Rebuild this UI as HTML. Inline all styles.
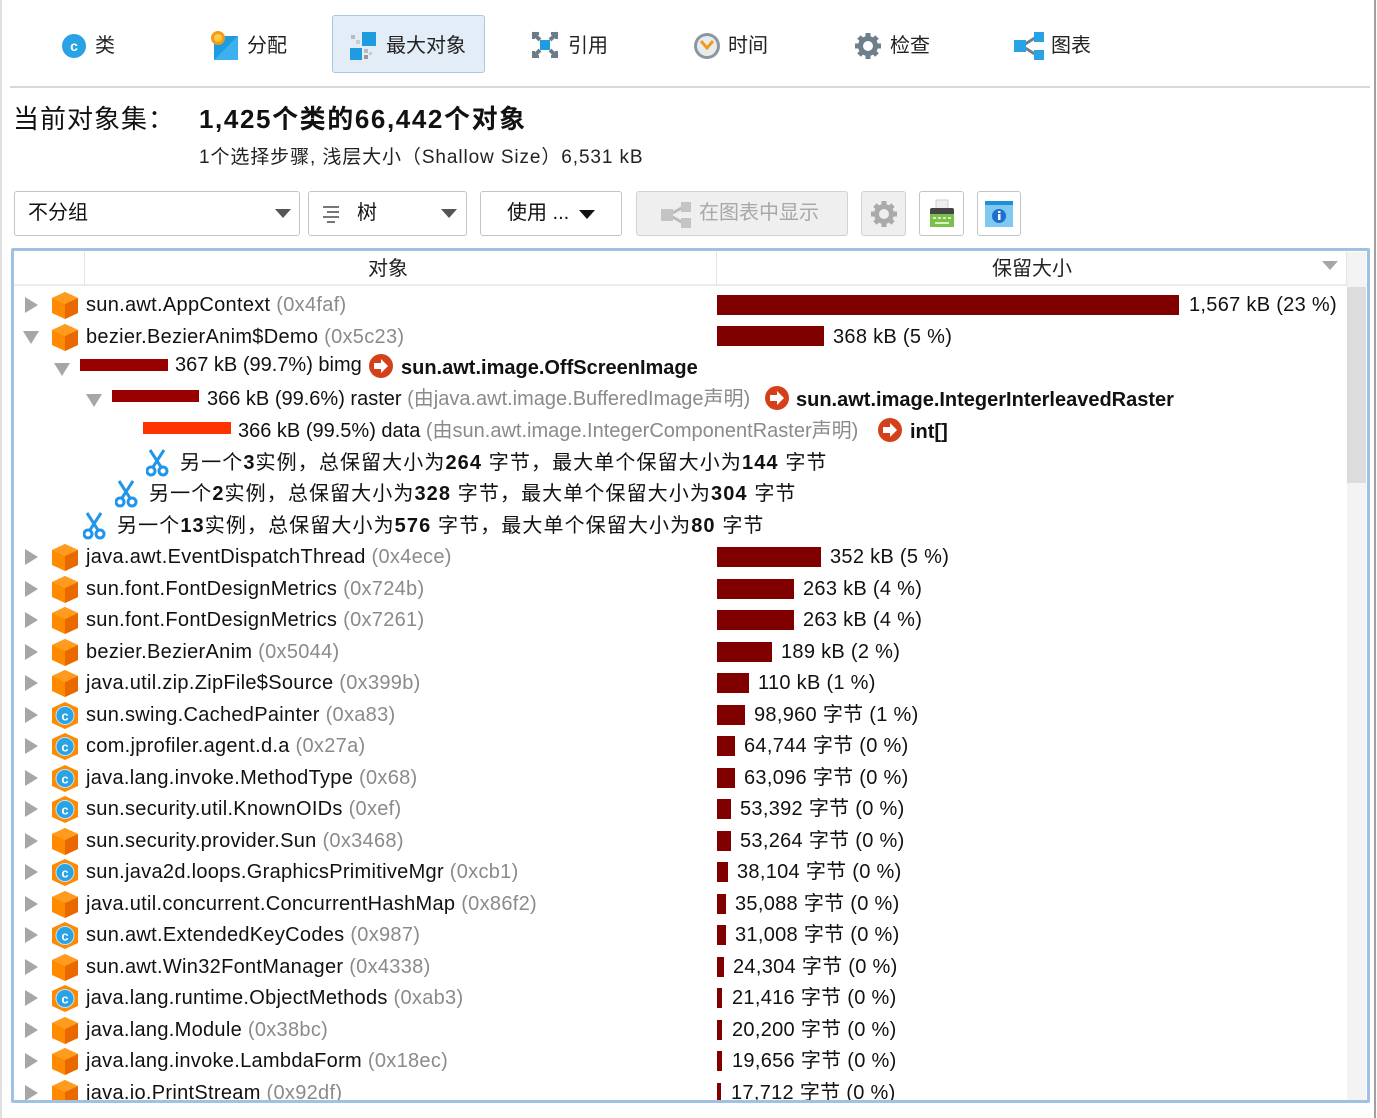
<!DOCTYPE html>
<html><head><meta charset="utf-8">
<style>
*{margin:0;padding:0;box-sizing:border-box}
body{width:1377px;height:1118px;background:#fff;position:relative;overflow:hidden;font-family:"Liberation Sans","Noto Sans CJK SC",sans-serif;color:#111}
.a{position:absolute;white-space:nowrap}
.tab{position:absolute;top:17px;height:58px;font-size:20px;line-height:58px;color:#222}
.btn{position:absolute;top:191px;height:45px;border:1px solid #c4c4c4;border-radius:3px;background:#fff;font-size:20px;line-height:43px}
.row{position:absolute;height:31px;line-height:31px;font-size:20px;white-space:nowrap;letter-spacing:0.3px}
.row.s{letter-spacing:1.1px}
.row.z{letter-spacing:0}
.g{color:#8a8a8a}
.tri{position:absolute;width:0;height:0}
.tr{border-left:13px solid #a6a6a6;border-top:8px solid transparent;border-bottom:8px solid transparent}
.td{border-top:13px solid #a6a6a6;border-left:8px solid transparent;border-right:8px solid transparent}
.bar{position:absolute;height:20px;background:#800000}
</style></head><body>
<div class="a" style="left:0;top:0;width:2px;height:1118px;background:#e0e0e0"></div>
<div class="a" style="left:1374px;top:0;width:2px;height:1118px;background:#a0a0a0"></div>
<div class="a" style="left:10px;top:86px;width:1360px;height:2px;background:#d8d8d8"></div>

<div class="a" style="left:332px;top:15px;width:153px;height:58px;background:#e3edf7;border:1px solid #a9c6e2;border-radius:3px"></div>
<svg class="a" style="left:61px;top:33px" width="26" height="26"><circle cx="13" cy="13" r="12" fill="#29a3e6"/><text x="13" y="18" font-size="14" font-weight="bold" fill="#fff" text-anchor="middle" font-family="Liberation Sans">c</text></svg>
<div class="tab" style="left:95px">类</div>
<svg class="a" style="left:208px;top:28px" width="32" height="34"><rect x="6" y="8" width="24" height="24" fill="#1f9be0"/><polygon points="6,32 30,8 30,32" fill="#3db0f0"/><circle cx="10" cy="10" r="7" fill="#f39a1c"/><circle cx="10" cy="10" r="4" fill="#ffcc40"/></svg>
<div class="tab" style="left:247px">分配</div>
<svg class="a" style="left:348px;top:30px" width="30" height="32"><rect x="14" y="2" width="14" height="14" fill="#1f9be0"/><rect x="2" y="18" width="12" height="12" fill="#1f9be0"/><rect x="3" y="5" width="4" height="4" fill="#bbb"/><rect x="8" y="10" width="4" height="4" fill="#ccc"/><rect x="16" y="19" width="4" height="4" fill="#bbb"/><rect x="16" y="25" width="4" height="4" fill="#999"/><rect x="21" y="22" width="3" height="3" fill="#ccc"/></svg>
<div class="tab" style="left:386px">最大对象</div>
<svg class="a" style="left:531px;top:31px" width="28" height="28"><rect x="9" y="9" width="10" height="10" fill="#1f9be0"/><path d="M2 2l7 7M26 2l-7 7M2 26l7-7M26 26l-7-7" stroke="#6b7b88" stroke-width="4"/><path d="M1 1h7v3H4v4H1zM27 1h-7v3h4v4h3zM1 27h7v-3H4v-4H1zM27 27h-7v-3h4v-4h3z" fill="#6b7b88"/></svg>
<div class="tab" style="left:568px">引用</div>
<svg class="a" style="left:693px;top:32px" width="28" height="28"><circle cx="14" cy="14" r="13" fill="#8b979f"/><circle cx="14" cy="14" r="10" fill="#e8ecef"/><path d="M8 9l6 7 6-7" stroke="#f39a1c" stroke-width="3" fill="none"/></svg>
<div class="tab" style="left:728px">时间</div>
<svg class="a" style="left:854px;top:32px" width="28" height="28"><g fill="#6e7f8c"><circle cx="14" cy="14" r="10"/><g stroke="#6e7f8c" stroke-width="5"><path d="M14 1v26M1 14h26M5 5l18 18M23 5L5 23"/></g></g><circle cx="14" cy="14" r="5" fill="#fff"/></svg>
<div class="tab" style="left:890px">检查</div>
<svg class="a" style="left:1014px;top:32px" width="30" height="28"><path d="M8 14L24 4M8 14l16 10" stroke="#6e7f8c" stroke-width="3"/><rect x="0" y="8" width="12" height="12" fill="#29a3e6"/><rect x="20" y="0" width="10" height="10" fill="#29a3e6"/><rect x="20" y="18" width="10" height="10" fill="#29a3e6"/></svg>
<div class="tab" style="left:1051px">图表</div>

<div class="a" style="left:13px;top:100px;font-size:26px;line-height:38px;letter-spacing:1px">当前对象集：</div>
<div class="a" style="left:199px;top:100px;font-size:26px;line-height:38px;font-weight:bold;letter-spacing:1.6px">1,425个类的66,442个对象</div>
<div class="a" style="left:199px;top:143px;font-size:19px;line-height:30px;color:#222;letter-spacing:0.9px">1个选择步骤, 浅层大小（Shallow Size）6,531 kB</div>

<div class="btn" style="left:14px;width:286px;padding-left:13px">不分组<div class="tri td" style="left:260px;top:17px;border-top-color:#555;border-top-width:9px"></div></div>
<div class="btn" style="left:308px;width:159px;padding-left:48px">树
<svg class="a" style="left:12px;top:13px" width="22" height="18"><path d="M2 2h16M6 7h12M2 12h16M6 17h8" stroke="#777" stroke-width="2"/></svg>
<div class="tri td" style="left:132px;top:17px;border-top-color:#555;border-top-width:9px"></div></div>
<div class="btn" style="left:480px;width:142px;padding-left:26px">使用 ...<div class="tri td" style="left:98px;top:18px;border-top-color:#111;border-top-width:9px"></div></div>
<div class="btn" style="left:636px;width:212px;padding-left:62px;background:#efefef;color:#a8a8a8;border-color:#d2d2d2">在图表中显示
<svg class="a" style="left:24px;top:10px" width="30" height="26"><path d="M8 13L24 4M8 13l16 9" stroke="#bbb" stroke-width="3"/><rect x="0" y="7" width="12" height="12" fill="#c4c4c4"/><rect x="20" y="0" width="10" height="10" fill="#c4c4c4"/><rect x="20" y="16" width="10" height="10" fill="#c4c4c4"/></svg></div>
<div class="btn" style="left:861px;width:45px;background:#efefef;border-color:#d2d2d2"><svg class="a" style="left:8px;top:8px" width="28" height="28"><g fill="#aaa"><circle cx="14" cy="14" r="10"/><g stroke="#aaa" stroke-width="5"><path d="M14 1v26M1 14h26M5 5l18 18M23 5L5 23"/></g></g><circle cx="14" cy="14" r="5" fill="#efefef"/></svg></div>
<div class="btn" style="left:919px;width:45px"><svg class="a" style="left:8px;top:7px" width="28" height="30"><rect x="8" y="1" width="12" height="10" fill="#eee" stroke="#ccc"/><rect x="2" y="9" width="24" height="8" rx="2" fill="#444"/><rect x="2" y="15" width="24" height="13" fill="#7cbf4a"/><g fill="#d8f0c0"><rect x="5" y="18" width="3" height="2"/><rect x="10" y="18" width="3" height="2"/><rect x="15" y="18" width="3" height="2"/><rect x="20" y="18" width="3" height="2"/><rect x="7" y="23" width="14" height="2"/></g></svg></div>
<div class="btn" style="left:977px;width:44px"><svg class="a" style="left:7px;top:9px" width="28" height="26"><rect x="0" y="0" width="28" height="26" fill="#7fc8f0"/><rect x="0" y="0" width="28" height="4" fill="#1f8fd6"/><circle cx="14" cy="15" r="7" fill="#1f6fd0"/><rect x="13" y="13" width="2.5" height="6" fill="#fff"/><rect x="13" y="10" width="2.5" height="2" fill="#fff"/></svg></div>

<div class="a" style="left:11px;top:248px;width:1359px;height:855px;border:3px solid #9ec2e4;border-radius:2px"></div>
<div class="a" style="left:14px;top:251px;width:1353px;height:35px;background:#fff;border-bottom:2px solid #ececec"></div>
<div class="a" style="left:84px;top:252px;width:1px;height:34px;background:#e4e4e4"></div>
<div class="a" style="left:716px;top:252px;width:1px;height:34px;background:#e4e4e4"></div>
<div class="a" style="left:1346px;top:252px;width:1px;height:34px;background:#e4e4e4"></div>
<div class="a" style="left:368px;top:254px;font-size:20px;line-height:30px;color:#222">对象</div>
<div class="a" style="left:992px;top:254px;font-size:20px;line-height:30px;color:#222">保留大小</div>
<div class="tri td" style="left:1322px;top:261px;border-top-width:9px"></div>
<div class="a" style="left:1347px;top:252px;width:19px;height:848px;background:#f3f3f3"></div>
<div class="a" style="left:1347px;top:287px;width:19px;height:196px;background:#dcdcdc"></div>

<svg width="0" height="0" style="position:absolute"><defs>
<g id="cube"><polygon points="13,0 26,6 26,21 13,27 0,21 0,6" fill="#ff8a00"/><polygon points="13,12 26,6 26,21 13,27" fill="#e96800"/><polygon points="0,6 13,0 26,6 13,12" fill="#ff9c1f"/></g>
<g id="cls"><polygon points="13,0 26,6 26,21 13,27 0,21 0,6" fill="#ff8a00"/><circle cx="13" cy="13.5" r="9" fill="#29a3e6"/><circle cx="13" cy="13.5" r="9" fill="none" stroke="#bfe4fa" stroke-width="1"/><text x="13" y="18.5" font-size="13" font-weight="bold" fill="#fff" text-anchor="middle" font-family="Liberation Sans">c</text></g>
<g id="arr"><circle cx="12" cy="12" r="12" fill="#d4401a"/><path d="M5 9h7V5l7 7-7 7v-4H5z" fill="#fff"/></g>
<g id="sc"><circle cx="5" cy="22" r="4" fill="none" stroke="#2196e8" stroke-width="3"/><circle cx="17" cy="22" r="4" fill="none" stroke="#2196e8" stroke-width="3"/><path d="M7 18L18 1M15 18L4 1" stroke="#2196e8" stroke-width="3"/></g>
</defs></svg>

<div class="a" style="left:14px;top:287px;width:1333px;height:813px;overflow:hidden">
<div style="position:absolute;left:-14px;top:-287px;width:1377px;height:1118px">
<div class="tri tr" style="left:25px;top:297px"></div><svg class="a" style="left:52px;top:292px" width="26" height="27"><use href="#cube"/></svg>
<div class="row" style="left:86px;top:290px">sun.awt.AppContext <span class="g">(0x4faf)</span></div>
<div class="bar" style="left:717px;top:295px;width:462px"></div><div class="row" style="left:1189px;top:290px">1,567 kB (23 %)</div>
<div class="tri td" style="left:23px;top:331px"></div><svg class="a" style="left:52px;top:324px" width="26" height="27"><use href="#cube"/></svg>
<div class="row" style="left:86px;top:322px">bezier.BezierAnim$Demo <span class="g">(0x5c23)</span></div>
<div class="bar" style="left:717px;top:326px;width:107px"></div><div class="row" style="left:833px;top:322px">368 kB (5 %)</div>
<div class="tri td" style="left:54px;top:363px"></div>
<div class="bar" style="left:80px;top:359px;width:88px;height:12px;background:#990000"></div>
<div class="row z" style="left:175px;top:350px">367 kB (99.7%) bimg</div>
<svg class="a" style="left:369px;top:354px" width="24" height="24"><use href="#arr"/></svg>
<div class="row z" style="left:401px;top:353px;font-weight:bold">sun.awt.image.OffScreenImage</div>
<div class="tri td" style="left:86px;top:394px"></div>
<div class="bar" style="left:112px;top:390px;width:87px;height:12px;background:#990000"></div>
<div class="row z" style="left:207px;top:384px">366 kB (99.6%) raster <span class="g">(由java.awt.image.BufferedImage声明)</span></div>
<svg class="a" style="left:765px;top:386px" width="24" height="24"><use href="#arr"/></svg>
<div class="row z" style="left:796px;top:385px;font-weight:bold">sun.awt.image.IntegerInterleavedRaster</div>
<div class="bar" style="left:143px;top:422px;width:88px;height:12px;background:#ff3300"></div>
<div class="row z" style="left:238px;top:416px">366 kB (99.5%) data <span class="g">(由sun.awt.image.IntegerComponentRaster声明)</span></div>
<svg class="a" style="left:878px;top:418px" width="24" height="24"><use href="#arr"/></svg>
<div class="row z" style="left:910px;top:417px;font-weight:bold">int[]</div>
<svg class="a" style="left:146px;top:449px" width="23" height="28"><use href="#sc"/></svg>
<div class="row s" style="left:180px;top:448px">另一个<b>3</b>实例，总保留大小为<b>264</b> 字节，最大单个保留大小为<b>144</b> 字节</div>
<svg class="a" style="left:115px;top:480px" width="23" height="28"><use href="#sc"/></svg>
<div class="row s" style="left:149px;top:479px">另一个<b>2</b>实例，总保留大小为<b>328</b> 字节，最大单个保留大小为<b>304</b> 字节</div>
<svg class="a" style="left:83px;top:512px" width="23" height="28"><use href="#sc"/></svg>
<div class="row s" style="left:117px;top:511px">另一个<b>13</b>实例，总保留大小为<b>576</b> 字节，最大单个保留大小为<b>80</b> 字节</div>

<div class="tri tr" style="left:25px;top:549px"></div><svg class="a" style="left:52px;top:544px" width="26" height="27"><use href="#cube"/></svg>
<div class="row" style="left:86px;top:542px">java.awt.EventDispatchThread <span class="g">(0x4ece)</span></div>
<div class="bar" style="left:717px;top:547px;width:104px"></div><div class="row" style="left:830px;top:542px">352 kB (5 %)</div>

<div class="tri tr" style="left:25px;top:581px"></div><svg class="a" style="left:52px;top:576px" width="26" height="27"><use href="#cube"/></svg>
<div class="row" style="left:86px;top:574px">sun.font.FontDesignMetrics <span class="g">(0x724b)</span></div>
<div class="bar" style="left:717px;top:579px;width:77px"></div><div class="row" style="left:803px;top:574px">263 kB (4 %)</div>

<div class="tri tr" style="left:25px;top:612px"></div><svg class="a" style="left:52px;top:607px" width="26" height="27"><use href="#cube"/></svg>
<div class="row" style="left:86px;top:605px">sun.font.FontDesignMetrics <span class="g">(0x7261)</span></div>
<div class="bar" style="left:717px;top:610px;width:77px"></div><div class="row" style="left:803px;top:605px">263 kB (4 %)</div>

<div class="tri tr" style="left:25px;top:644px"></div><svg class="a" style="left:52px;top:639px" width="26" height="27"><use href="#cube"/></svg>
<div class="row" style="left:86px;top:637px">bezier.BezierAnim <span class="g">(0x5044)</span></div>
<div class="bar" style="left:717px;top:642px;width:55px"></div><div class="row" style="left:781px;top:637px">189 kB (2 %)</div>

<div class="tri tr" style="left:25px;top:675px"></div><svg class="a" style="left:52px;top:670px" width="26" height="27"><use href="#cube"/></svg>
<div class="row" style="left:86px;top:668px">java.util.zip.ZipFile$Source <span class="g">(0x399b)</span></div>
<div class="bar" style="left:717px;top:673px;width:32px"></div><div class="row" style="left:758px;top:668px">110 kB (1 %)</div>

<div class="tri tr" style="left:25px;top:707px"></div><svg class="a" style="left:52px;top:702px" width="26" height="27"><use href="#cls"/></svg>
<div class="row" style="left:86px;top:700px">sun.swing.CachedPainter <span class="g">(0xa83)</span></div>
<div class="bar" style="left:717px;top:705px;width:28px"></div><div class="row" style="left:754px;top:700px">98,960 字节 (1 %)</div>

<div class="tri tr" style="left:25px;top:738px"></div><svg class="a" style="left:52px;top:733px" width="26" height="27"><use href="#cls"/></svg>
<div class="row" style="left:86px;top:731px">com.jprofiler.agent.d.a <span class="g">(0x27a)</span></div>
<div class="bar" style="left:717px;top:736px;width:18px"></div><div class="row" style="left:744px;top:731px">64,744 字节 (0 %)</div>

<div class="tri tr" style="left:25px;top:770px"></div><svg class="a" style="left:52px;top:765px" width="26" height="27"><use href="#cls"/></svg>
<div class="row" style="left:86px;top:763px">java.lang.invoke.MethodType <span class="g">(0x68)</span></div>
<div class="bar" style="left:717px;top:768px;width:18px"></div><div class="row" style="left:744px;top:763px">63,096 字节 (0 %)</div>

<div class="tri tr" style="left:25px;top:801px"></div><svg class="a" style="left:52px;top:796px" width="26" height="27"><use href="#cls"/></svg>
<div class="row" style="left:86px;top:794px">sun.security.util.KnownOIDs <span class="g">(0xef)</span></div>
<div class="bar" style="left:717px;top:799px;width:14px"></div><div class="row" style="left:740px;top:794px">53,392 字节 (0 %)</div>

<div class="tri tr" style="left:25px;top:833px"></div><svg class="a" style="left:52px;top:828px" width="26" height="27"><use href="#cube"/></svg>
<div class="row" style="left:86px;top:826px">sun.security.provider.Sun <span class="g">(0x3468)</span></div>
<div class="bar" style="left:717px;top:831px;width:14px"></div><div class="row" style="left:740px;top:826px">53,264 字节 (0 %)</div>

<div class="tri tr" style="left:25px;top:864px"></div><svg class="a" style="left:52px;top:859px" width="26" height="27"><use href="#cls"/></svg>
<div class="row" style="left:86px;top:857px">sun.java2d.loops.GraphicsPrimitiveMgr <span class="g">(0xcb1)</span></div>
<div class="bar" style="left:717px;top:862px;width:11px"></div><div class="row" style="left:737px;top:857px">38,104 字节 (0 %)</div>

<div class="tri tr" style="left:25px;top:896px"></div><svg class="a" style="left:52px;top:891px" width="26" height="27"><use href="#cube"/></svg>
<div class="row" style="left:86px;top:889px">java.util.concurrent.ConcurrentHashMap <span class="g">(0x86f2)</span></div>
<div class="bar" style="left:717px;top:894px;width:9px"></div><div class="row" style="left:735px;top:889px">35,088 字节 (0 %)</div>

<div class="tri tr" style="left:25px;top:927px"></div><svg class="a" style="left:52px;top:922px" width="26" height="27"><use href="#cls"/></svg>
<div class="row" style="left:86px;top:920px">sun.awt.ExtendedKeyCodes <span class="g">(0x987)</span></div>
<div class="bar" style="left:717px;top:925px;width:9px"></div><div class="row" style="left:735px;top:920px">31,008 字节 (0 %)</div>

<div class="tri tr" style="left:25px;top:959px"></div><svg class="a" style="left:52px;top:954px" width="26" height="27"><use href="#cube"/></svg>
<div class="row" style="left:86px;top:952px">sun.awt.Win32FontManager <span class="g">(0x4338)</span></div>
<div class="bar" style="left:717px;top:957px;width:7px"></div><div class="row" style="left:733px;top:952px">24,304 字节 (0 %)</div>

<div class="tri tr" style="left:25px;top:990px"></div><svg class="a" style="left:52px;top:985px" width="26" height="27"><use href="#cls"/></svg>
<div class="row" style="left:86px;top:983px">java.lang.runtime.ObjectMethods <span class="g">(0xab3)</span></div>
<div class="bar" style="left:717px;top:988px;width:5px"></div><div class="row" style="left:732px;top:983px">21,416 字节 (0 %)</div>

<div class="tri tr" style="left:25px;top:1022px"></div><svg class="a" style="left:52px;top:1017px" width="26" height="27"><use href="#cube"/></svg>
<div class="row" style="left:86px;top:1015px">java.lang.Module <span class="g">(0x38bc)</span></div>
<div class="bar" style="left:717px;top:1020px;width:5px"></div><div class="row" style="left:732px;top:1015px">20,200 字节 (0 %)</div>

<div class="tri tr" style="left:25px;top:1053px"></div><svg class="a" style="left:52px;top:1048px" width="26" height="27"><use href="#cube"/></svg>
<div class="row" style="left:86px;top:1046px">java.lang.invoke.LambdaForm <span class="g">(0x18ec)</span></div>
<div class="bar" style="left:717px;top:1051px;width:5px"></div><div class="row" style="left:732px;top:1046px">19,656 字节 (0 %)</div>

<div class="tri tr" style="left:25px;top:1085px"></div><svg class="a" style="left:52px;top:1080px" width="26" height="27"><use href="#cube"/></svg>
<div class="row" style="left:86px;top:1078px">java.io.PrintStream <span class="g">(0x92df)</span></div>
<div class="bar" style="left:717px;top:1083px;width:4px"></div><div class="row" style="left:731px;top:1078px">17,712 字节 (0 %)</div>
</div></div>
</body></html>
